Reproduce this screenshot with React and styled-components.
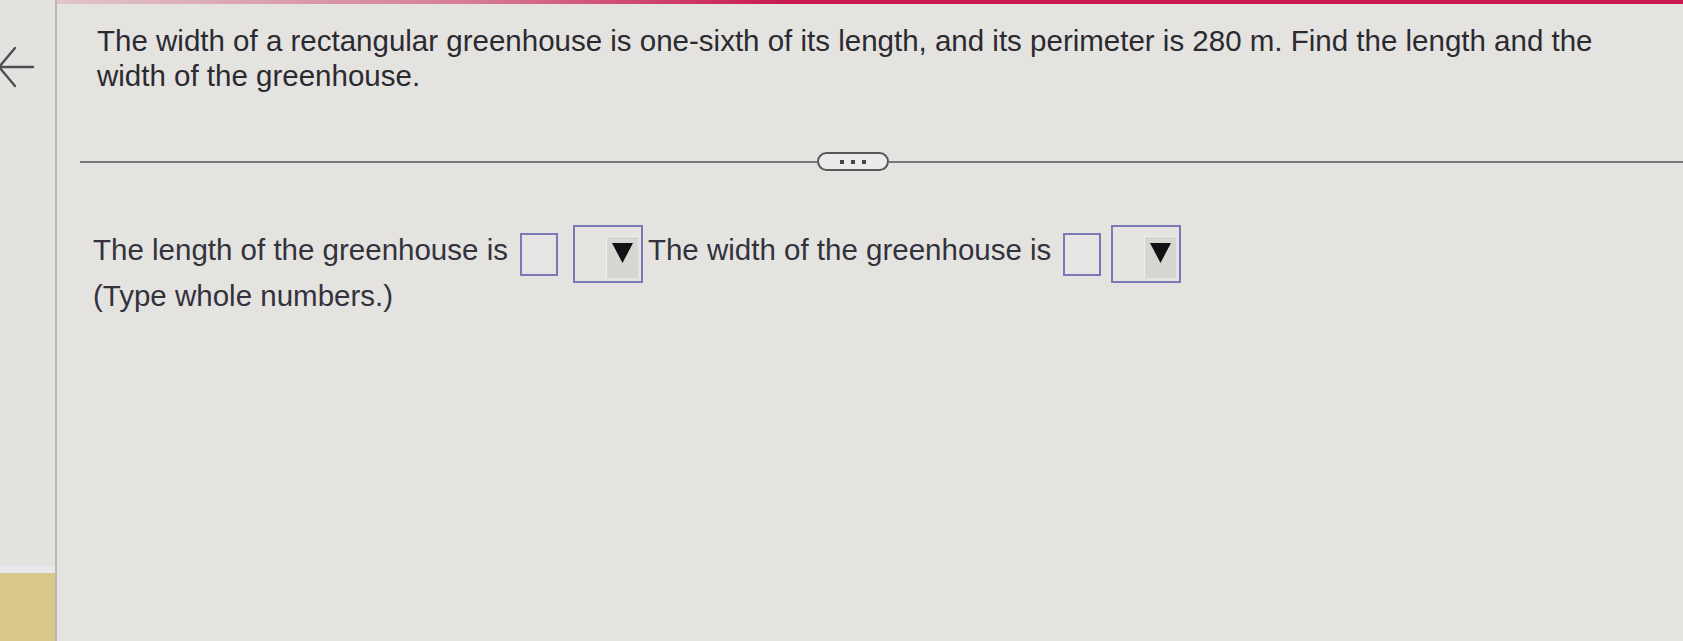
import styled, { createGlobalStyle } from 'styled-components'

const GlobalStyle = createGlobalStyle`
  html, body {
    margin: 0;
    padding: 0;
    background: #e4e3e0;
  }
  body {
    font-family: "Liberation Sans", Arial, sans-serif;
    color: #2f2f33;
  }
`

const Page = styled.div`
  display: flex;
  height: 641px;
  overflow: hidden;
  background: #e4e3e0;
`

const Sidebar = styled.aside`
  width: 55px;
  flex: 0 0 55px;
  border-right: 2px solid #b9b8b6;
  display: flex;
  flex-direction: column;
  background: #e3e2df;
`

const BackButton = styled.button`
  margin-top: 45px;
  width: 36px;
  height: 44px;
  padding: 0;
  border: 0;
  background: none;
  display: flex;
  align-items: center;
  cursor: pointer;
`

const Spacer = styled.div`
  flex: 1;
`

const Highlight = styled.div`
  height: 68px;
  background: #d8c98b;
  border-top: 7px solid #e9e8ec;
`

const Main = styled.main`
  flex: 1;
  display: flex;
  flex-direction: column;
  min-width: 0;
`

const TopBar = styled.div`
  height: 4px;
  background: linear-gradient(90deg, rgba(200, 25, 76, 0.15) 0%, rgba(200, 25, 76, 0.5) 25%, #c8194c 45%, #c8194c 100%);
`

const Question = styled.p`
  margin: 0;
  padding: 19px 0 0 40px;
  max-width: 1530px;
  font-size: 29.5px;
  line-height: 35px;
  color: #2b2a30;
`

const Divider = styled.div`
  display: flex;
  align-items: center;
  margin-top: 59px;
  padding-left: 23px;
`

const Rule = styled.div`
  height: 2px;
  background: #77767a;
  flex: ${(p) => (p.$grow ? '1' : `0 0 ${p.$width}px`)};
`

const MoreButton = styled.button`
  width: 72px;
  height: 19px;
  flex: 0 0 72px;
  border: 2px solid #58575c;
  border-radius: 10px;
  background: #ecebe9;
  padding: 0;
  display: flex;
  align-items: center;
  justify-content: center;
  gap: 7px;
`

const Dot = styled.span`
  width: 4px;
  height: 4px;
  background: #47464b;
`

const AnswerRow = styled.div`
  display: flex;
  align-items: center;
  margin-top: 54px;
  padding-left: 36px;
  height: 58px;
`

const Label = styled.span`
  font-size: 29.5px;
  line-height: 33px;
  padding-bottom: 10px;
  color: #33323d;
  white-space: nowrap;
  margin-right: ${(p) => p.$after}px;
`

const InputBox = styled.span`
  width: 34px;
  height: 39px;
  border: 2px solid #7b78b7;
  background: #e6e5e3;
  margin-right: ${(p) => p.$after}px;
`

const Select = styled.span`
  width: 63px;
  height: 54px;
  border: 2px solid #7b78b7;
  background: #e5e4e1;
  display: flex;
  justify-content: flex-end;
  align-items: center;
  padding-right: 3px;
  box-sizing: content-box;
  margin-right: ${(p) => p.$after}px;
`

const SelectButton = styled.span`
  width: 32px;
  height: 42px;
  margin-top: 6px;
  background: #d7d6d2;
  border-top: 1px solid #f1f0ee;
  border-left: 1px solid #f1f0ee;
  box-sizing: border-box;
  display: flex;
  justify-content: center;
  padding-top: 6px;
`

const Hint = styled.p`
  margin: -4px 0 0 36px;
  font-size: 29.5px;
  line-height: 33px;
  color: #33323d;
`

function ArrowLeft() {
  return (
    <svg width="36" height="44" viewBox="0 0 36 44" fill="none">
      <path d="M-1 22 H33 M-1 22 L15 3 M-1 22 L15 41" stroke="#4f4e54" strokeWidth="2.4" strokeLinecap="round" />
    </svg>
  )
}

function Caret() {
  return (
    <svg width="21" height="20" viewBox="0 0 21 20">
      <polygon points="0,0 21,0 10.5,20" fill="#111114" />
    </svg>
  )
}

function Dropdown({ after = 0 }) {
  return (
    <Select $after={after}>
      <SelectButton>
        <Caret />
      </SelectButton>
    </Select>
  )
}

export default function App() {
  return (
    <>
      <GlobalStyle />
      <Page>
        <Sidebar>
          <BackButton aria-label="Back">
            <ArrowLeft />
          </BackButton>
          <Spacer />
          <Highlight />
        </Sidebar>
        <Main>
          <TopBar />
          <Question>
            The width of a rectangular greenhouse is one-sixth of its length, and its perimeter is 280 m. Find the length and the width of the greenhouse.
          </Question>
          <Divider>
            <Rule $width={737} />
            <MoreButton aria-label="More">
              <Dot />
              <Dot />
              <Dot />
            </MoreButton>
            <Rule $grow />
          </Divider>
          <AnswerRow>
            <Label $after={12}>The length of the greenhouse is</Label>
            <InputBox $after={15} />
            <Dropdown after={5} />
            <Label $after={12}>The width of the greenhouse is</Label>
            <InputBox $after={10} />
            <Dropdown />
          </AnswerRow>
          <Hint>(Type whole numbers.)</Hint>
        </Main>
      </Page>
    </>
  )
}
